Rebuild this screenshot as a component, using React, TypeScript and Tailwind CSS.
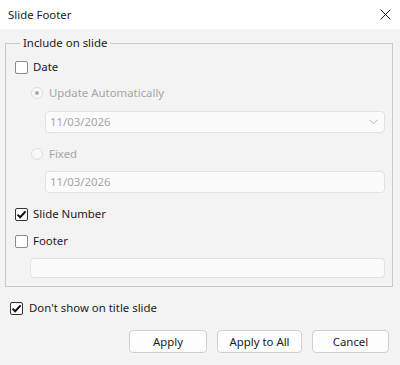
import React from "react";

const font = { fontFamily: '"Noto Sans", "Open Sans", sans-serif' };

function Check({ checked }: { checked?: boolean }) {
  return (
    <div
      className={`w-[13px] h-[13px] rounded-[2px] border bg-white flex items-center justify-center shrink-0 ${
        checked ? "border-[#333333]" : "border-[#8a8a8a]"
      }`}
    >
      {checked && (
        <svg width="11" height="11" viewBox="0 0 11 11">
          <path d="M1.5 5.6 L4.2 8.3 L9.6 2.4" fill="none" stroke="#111" strokeWidth="2" />
        </svg>
      )}
    </div>
  );
}

function Radio({ selected }: { selected?: boolean }) {
  return (
    <div className="w-[12px] h-[12px] rounded-full border border-[#dcdcdc] bg-[#f8f8f8] flex items-center justify-center shrink-0">
      {selected && <div className="w-[4px] h-[4px] rounded-full bg-[#a8a8a8]" />}
    </div>
  );
}

export default function App() {
  return (
    <div className="w-[400px] h-[365px] bg-[#f3f3f3] text-[11.4px] text-[#1b1b1b] flex flex-col" style={font}>
      <div className="h-[29px] bg-white flex items-center justify-between pl-[8px] pr-[9px] shrink-0">
        <span>Slide Footer</span>
        <svg width="11" height="11" viewBox="0 0 11 11">
          <path d="M0.5 0.5 L10.5 10.5 M10.5 0.5 L0.5 10.5" stroke="#222" strokeWidth="1" />
        </svg>
      </div>
      <div className="flex flex-col pl-[5px] pr-[7px] pt-[6px]">
        <fieldset className="border border-[#c9c9c9] pl-[9px] pr-[7px] pb-[8px] flex flex-col">
          <legend className="ml-[5px] px-[3px] leading-[16px]">Include on slide</legend>
          <div className="h-[20px] mt-[6px] flex items-center gap-[5px]">
            <Check />
            <span>Date</span>
          </div>
          <div className="h-[20px] mt-[6px] pl-[16px] flex items-center gap-[6px] text-[#a6a6a6]">
            <Radio selected />
            <span>Update Automatically</span>
          </div>
          <div className="h-[22px] mt-[8px] ml-[30px] rounded-[4px] border border-[#e2e2e2] bg-[#fbfbfb] flex items-center justify-between pl-[4px] pr-[6px] text-[#a6a6a6]">
            <span>11/03/2026</span>
            <svg width="9" height="6" viewBox="0 0 9 6">
              <path d="M0.5 0.8 L4.5 4.8 L8.5 0.8" fill="none" stroke="#b5b5b5" strokeWidth="1" />
            </svg>
          </div>
          <div className="h-[20px] mt-[11px] pl-[16px] flex items-center gap-[6px] text-[#a6a6a6]">
            <Radio />
            <span>Fixed</span>
          </div>
          <div className="h-[22px] mt-[7px] ml-[30px] rounded-[4px] border border-[#e2e2e2] bg-[#fbfbfb] flex items-center pl-[4px] text-[#a6a6a6]">
            <span>11/03/2026</span>
          </div>
          <div className="h-[20px] mt-[11px] flex items-center gap-[5px]">
            <Check checked />
            <span>Slide Number</span>
          </div>
          <div className="h-[20px] mt-[7px] flex items-center gap-[5px]">
            <Check />
            <span>Footer</span>
          </div>
          <div className="h-[20px] mt-[7px] ml-[15px] rounded-[4px] border border-[#e2e2e2] bg-[#fbfbfb]" />
        </fieldset>
        <div className="h-[20px] mt-[11px] pl-[5px] flex items-center gap-[6px]">
          <Check checked />
          <span>Don't show on title slide</span>
        </div>
        <div className="mt-[12px] flex justify-end gap-[10px] pr-[4px]">
          <button className="w-[78px] h-[23px] rounded-[4px] border border-[#d0d0d0] bg-[#fdfdfd]">Apply</button>
          <button className="w-[85px] h-[23px] rounded-[4px] border border-[#d0d0d0] bg-[#fdfdfd]">Apply to All</button>
          <button className="w-[77px] h-[23px] rounded-[4px] border border-[#d0d0d0] bg-[#fdfdfd]">Cancel</button>
        </div>
      </div>
    </div>
  );
}
